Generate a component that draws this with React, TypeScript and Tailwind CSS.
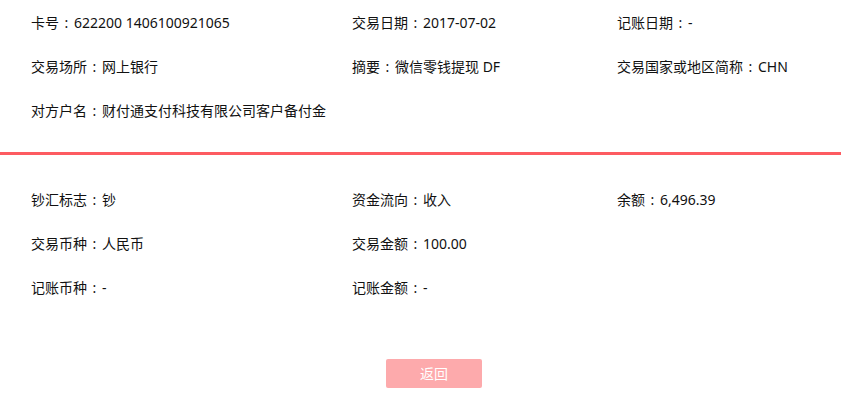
import React from 'react';

type Field = { label: string; value: string };

const top: Field[] = [
  { label: '卡号', value: '622200 1406100921065' },
  { label: '交易日期', value: '2017-07-02' },
  { label: '记账日期', value: '-' },
  { label: '交易场所', value: '网上银行' },
  { label: '摘要', value: '微信零钱提现 DF' },
  { label: '交易国家或地区简称', value: 'CHN' },
  { label: '对方户名', value: '财付通支付科技有限公司客户备付金' },
];

const bottom: Field[] = [
  { label: '钞汇标志', value: '钞' },
  { label: '资金流向', value: '收入' },
  { label: '余额', value: '6,496.39' },
  { label: '交易币种', value: '人民币' },
  { label: '交易金额', value: '100.00' },
  { label: '', value: '' },
  { label: '记账币种', value: '-' },
  { label: '记账金额', value: '-' },
];

function Grid({ items }: { items: Field[] }) {
  return (
    <div className="grid grid-cols-[321px_265px_1fr] pl-[31px]">
      {items.map((f, i) => (
        <div key={i} className="h-[44px] flex items-center whitespace-nowrap">
          {f.label && (
            <span>
              {f.label}
              <span className="inline-block w-[15px] text-center">:</span>
              {f.value}
            </span>
          )}
        </div>
      ))}
    </div>
  );
}

export default function App() {
  return (
    <div
      className="w-[841px] h-[415px] bg-white text-[14px] text-[#111]"
      style={{ fontFamily: '"Segoe UI", "Noto Sans", "Noto Sans CJK SC", sans-serif' }}
    >
      <Grid items={top} />
      <div className="mt-[20px] h-[3px] bg-[#fd5b61]" />
      <div className="pt-[22px]">
        <Grid items={bottom} />
      </div>
      <div className="flex mt-[50px] pl-[386px]">
        <button className="w-[96px] h-[29px] rounded-[2px] bg-[#fdaaac] text-white text-[14px]">
          返回
        </button>
      </div>
    </div>
  );
}
